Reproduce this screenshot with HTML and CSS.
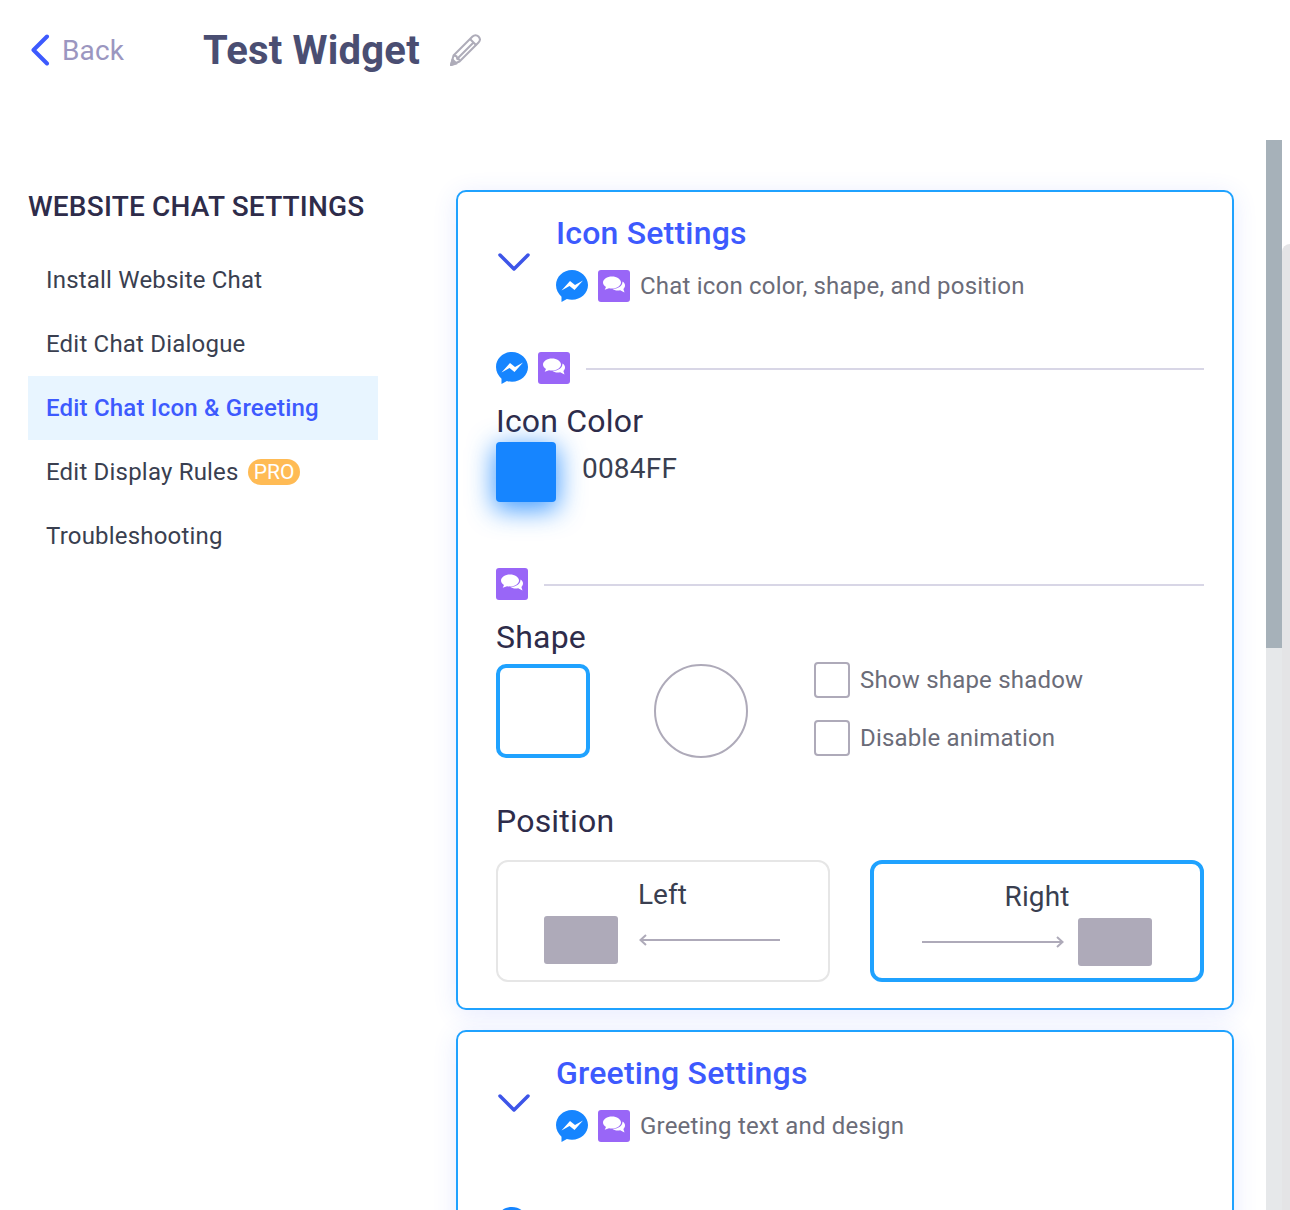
FILE: index.html
```html
<!DOCTYPE html>
<html lang="en">
<head>
  <meta charset="UTF-8">
  <title>Test Widget</title>
  <link rel="stylesheet" href="styles.css">
</head>
<body>
  <svg class="defs" width="0" height="0">
    <symbol id="messenger" viewBox="0 0 32 32">
      <path fill="#1685ff" d="M16 0C7.200 0 0 6.700 0 15c0 4.700 2.300 8.900 5.500 11.700V32l5.400-3c1.600.5 3.300.8 5.100.8 8.800 0 16-6.800 16-14.800S24.800 0 16 0z"/>
      <path fill="#fff" d="M5.500 20.500L14 11l5 4 8-4.500-8.500 9.500-5-4z"/>
    </symbol>
    <symbol id="bubbles" viewBox="0 0 32 32">
      <rect width="32" height="32" rx="3" fill="#9966f7"/>
      <path fill="#fff" d="M14 6.500c-4.900 0-9 2.700-9 6 0 1.800 1.200 3.400 3 4.500l-1.300 2.800 4.300-1.600c.9.200 2 .3 3 .3 4.900 0 9-2.700 9-6s-4.100-6-9-6z"/>
      <path fill="#fff" d="M24.500 11.500c1.600 1 2.500 2.400 2.500 4 0 1.300-.6 2.500-1.600 3.400l1.100 3.600-4.300-2.300c-.9.200-1.800.3-2.700.3-2 0-3.800-.6-5-1.500 5.200 0 10-2.800 10-7.500z"/>
    </symbol>
  </svg>

  <header class="topbar">
    <a class="back">
      <svg width="20" height="32" viewBox="0 0 20 32"><path d="M17 2.500L3.500 16 17 29.500" fill="none" stroke="#3d5afe" stroke-width="4" stroke-linecap="round" stroke-linejoin="round"/></svg>
      <span>Back</span>
    </a>
    <h1>Test Widget</h1>
    <svg class="pencil" width="34" height="34" viewBox="0 0 34 34" fill="none" stroke="#aeacb9" stroke-width="2" stroke-linejoin="round">
      <path d="M2 32l2.500-9.500L23.500 3.500c1.800-1.800 4.300-1.800 6 0s1.800 4.200 0 6L10.500 28.500z"/>
      <path d="M4.500 22.500l3 .8.800 2.700 2.700.700M21 6l6.500 6.500M8 26L25 9"/>
      <path d="M2 32l1.500-5.500 4 4z" fill="#aeacb9"/>
    </svg>
  </header>

  <div class="layout">
    <nav class="sidebar">
      <h2>WEBSITE CHAT SETTINGS</h2>
      <a class="nav-item">Install Website Chat</a>
      <a class="nav-item">Edit Chat Dialogue</a>
      <a class="nav-item active">Edit Chat Icon &amp; Greeting</a>
      <a class="nav-item">Edit Display Rules <span class="pro">PRO</span></a>
      <a class="nav-item">Troubleshooting</a>
    </nav>

    <main class="content">
      <section class="card">
        <div class="card-head">
          <svg class="chevron" width="32" height="20" viewBox="0 0 32 20"><path d="M2 2l14 14L30 2" fill="none" stroke="#3d55e8" stroke-width="3.500" stroke-linecap="round" stroke-linejoin="round"/></svg>
          <div>
            <h3>Icon Settings</h3>
            <div class="sub">
              <svg class="ico"><use href="#messenger"/></svg>
              <svg class="ico"><use href="#bubbles"/></svg>
              <span>Chat icon color, shape, and position</span>
            </div>
          </div>
        </div>

        <div class="rule-row">
          <svg class="ico"><use href="#messenger"/></svg>
          <svg class="ico"><use href="#bubbles"/></svg>
          <div class="rule"></div>
        </div>
        <div class="label">Icon Color</div>
        <div class="color-row">
          <div class="swatch"></div>
          <div class="hex">0084FF</div>
        </div>

        <div class="rule-row rule-two">
          <svg class="ico"><use href="#bubbles"/></svg>
          <div class="rule"></div>
        </div>
        <div class="label">Shape</div>
        <div class="shape-row">
          <div class="shape square"></div>
          <div class="shape circle"></div>
          <div class="checks">
            <label class="check"><span class="box"></span>Show shape shadow</label>
            <label class="check"><span class="box"></span>Disable animation</label>
          </div>
        </div>

        <div class="label label-pos">Position</div>
        <div class="pos-row">
          <div class="pos pos-left">
            <div class="pos-name">Left</div>
            <div class="pos-art">
              <div class="block"></div>
              <svg width="142" height="12" viewBox="0 0 142 12" fill="none" stroke="#aeaab9" stroke-width="2"><path d="M141 6H1.500M7 1L1.500 6 7 11"/></svg>
            </div>
          </div>
          <div class="pos pos-right">
            <div class="pos-name">Right</div>
            <div class="pos-art">
              <svg width="142" height="12" viewBox="0 0 142 12" fill="none" stroke="#aeaab9" stroke-width="2"><path d="M0 6h140.500M135 1l5.500 5-5.500 5"/></svg>
              <div class="block"></div>
            </div>
          </div>
        </div>
      </section>

      <section class="card">
        <div class="card-head">
          <svg class="chevron chevron-next" width="32" height="20" viewBox="0 0 32 20"><path d="M2 2l14 14L30 2" fill="none" stroke="#3d55e8" stroke-width="3.500" stroke-linecap="round" stroke-linejoin="round"/></svg>
          <div>
            <h3>Greeting Settings</h3>
            <div class="sub">
              <svg class="ico"><use href="#messenger"/></svg>
              <svg class="ico"><use href="#bubbles"/></svg>
              <span>Greeting text and design</span>
            </div>
          </div>
        </div>
        <div class="rule-row rule-next">
          <svg class="ico"><use href="#messenger"/></svg>
        </div>
      </section>
    </main>
  </div>

  <div class="scroll-track"></div>
  <div class="scroll-gutter"></div>
  <div class="scroll-thumb"></div>
</body>
</html>
```

FILE: styles.css
```css
* { box-sizing: border-box; }
html, body {
  margin: 0;
  height: 1210px;
  overflow: hidden;
  background: #fff;
  font-family: Roboto, sans-serif;
  color: #3a3f50;
}

.defs { position: absolute; }

.topbar {
  display: flex;
  align-items: center;
  height: 100px;
  padding-left: 30px;
}

.back {
  display: flex;
  align-items: center;
  gap: 12px;
  width: 173px;
  font-size: 28px;
  letter-spacing: 0.1px;
  color: #9b96c0;
}

h1 {
  margin: 0 29px 0 0;
  font-size: 40px;
  font-weight: 700;
  letter-spacing: 0.2px;
  color: #4a4e72;
}

.layout {
  display: flex;
  height: 1110px;
  overflow: hidden;
  padding: 90px 56px 0 28px;
}

.sidebar { width: 350px; margin-right: 78px; flex-shrink: 0; }

.sidebar h2 {
  margin: 0;
  height: 58px;
  font-size: 28px;
  line-height: 34px;
  font-weight: 500;
  letter-spacing: 0.2px;
  color: #2e2c4a;
}

.nav-item {
  display: flex;
  align-items: center;
  height: 64px;
  padding-left: 18px;
  font-size: 24px;
  letter-spacing: 0.2px;
  white-space: pre;
}

.nav-item.active {
  background: #e8f5ff;
  color: #3d5afe;
  font-weight: 500;
}

.pro {
  margin-left: 3px;
  padding: 0 6px;
  height: 26px;
  line-height: 26px;
  border-radius: 13px;
  background: #ffbb55;
  color: #fff;
  font-size: 21px;
  letter-spacing: 0;
}

.content { width: 778px; }

.card {
  border: 2px solid #1fa2ff;
  border-radius: 10px;
  background: #fff;
  padding: 0 28px 26px 38px;
  margin-bottom: 20px;
  box-shadow: 0 4px 24px rgba(61, 90, 254, 0.12);
}

.card-head {
  display: flex;
  height: 160px;
  padding-top: 21px;
}

.chevron { margin: 40px 26px 0 2px; flex-shrink: 0; }
.chevron-next { margin-top: 41px; }

.card-head h3 {
  margin: 0 0 17px;
  font-size: 32px;
  line-height: 40px;
  font-weight: 500;
  letter-spacing: 0.2px;
  color: #3d5afe;
}

.sub {
  display: flex;
  align-items: center;
  gap: 10px;
  font-size: 24px;
  letter-spacing: 0.2px;
  color: #6b6c78;
}

.ico { width: 32px; height: 32px; flex-shrink: 0; }

.rule-row {
  display: flex;
  align-items: center;
  gap: 10px;
  height: 32px;
}

.rule-next { margin-top: 15px; }

.rule {
  flex: 1;
  height: 2px;
  margin: 2px 0 0 6px;
  background: #d8d6e6;
}

.label {
  margin-top: 16px;
  font-size: 32px;
  line-height: 42px;
  letter-spacing: 0.2px;
  color: #2e2c4a;
}

.color-row { display: flex; }

.swatch {
  width: 60px;
  height: 60px;
  border-radius: 4px;
  background: #1685ff;
  box-shadow: 0 6px 26px 2px rgba(22, 133, 255, 0.8);
}

.hex {
  margin-left: 26px;
  font-size: 28px;
  line-height: 54px;
  letter-spacing: 0.2px;
}

.rule-two { margin-top: 66px; }

.shape-row {
  display: flex;
  height: 94px;
  margin-top: 6px;
}

.shape { width: 94px; height: 94px; }
.square { border: 4px solid #1fa2ff; border-radius: 10px; }
.circle { border: 2px solid #aeaab9; border-radius: 50%; margin-left: 64px; }

.checks {
  display: flex;
  flex-direction: column;
  gap: 22px;
  margin: -2px 0 0 66px;
}

.check {
  display: flex;
  align-items: center;
  gap: 10px;
  font-size: 24px;
  letter-spacing: 0.2px;
  color: #6b6c78;
}

.box {
  width: 36px;
  height: 36px;
  border: 2px solid #aeaab9;
  border-radius: 4px;
}

.label-pos { margin: 42px 0 18px; }

.pos-row { display: flex; justify-content: space-between; }

.pos {
  width: 334px;
  height: 122px;
  border-radius: 12px;
  text-align: center;
  font-size: 28px;
  letter-spacing: 0.1px;
}

.pos-left { border: 2px solid #e6e6e6; padding: 13px 47px 0 46px; }
.pos-right { border: 4px solid #1fa2ff; padding: 13px 48px 0 48px; }

.pos-name { line-height: 40px; height: 41px; }

.pos-art {
  display: flex;
  align-items: center;
  justify-content: space-between;
}

.block {
  width: 74px;
  height: 48px;
  border-radius: 3px;
  background: #aeaab9;
}

.scroll-track {
  position: absolute;
  left: 1266px;
  top: 140px;
  width: 16px;
  bottom: 0;
  background: #e6e8ea;
}

.scroll-gutter {
  position: absolute;
  left: 1282px;
  top: 244px;
  width: 8px;
  bottom: 0;
  border-top-left-radius: 8px;
  background: #e4e4e6;
}

.scroll-thumb {
  position: absolute;
  left: 1266px;
  top: 140px;
  width: 16px;
  height: 508px;
  background: #a6b1b9;
}
```
